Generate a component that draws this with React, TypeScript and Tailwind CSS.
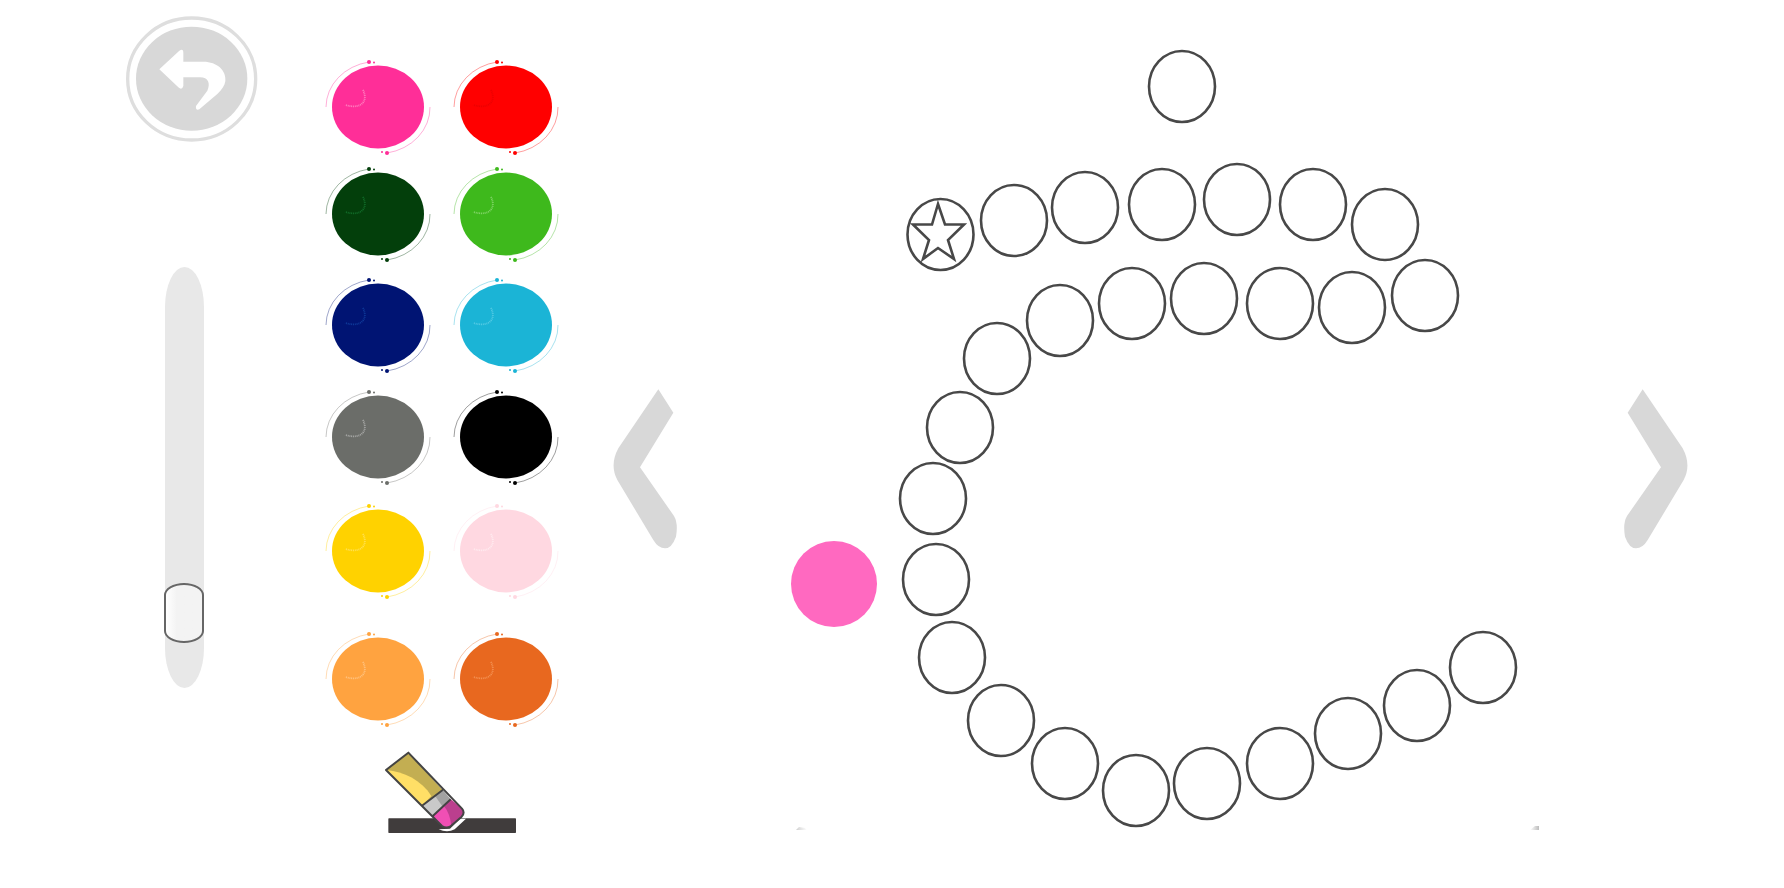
const swatches = [
  { left: '#ff2e98', right: '#ff0000', leftMark: '#ffd0e8', rightMark: '#d80000', gap: 'mt-[57px]' },
  { left: '#033f0b', right: '#3eb91c', leftMark: '#1f9a48', rightMark: '#c8f2b8', gap: 'mt-[7px]' },
  { left: '#001473', right: '#1bb4d6', leftMark: '#1c60c0', rightMark: '#8fe2f4', gap: 'mt-[11px]' },
  { left: '#6b6d69', right: '#000000', leftMark: '#e4e4e4', rightMark: '#000000', gap: 'mt-[12px]' },
  { left: '#ffd200', right: '#ffd8e1', leftMark: '#fff2a8', rightMark: '#ffffff', gap: 'mt-[14px]' },
  { left: '#ffa340', right: '#e8681f', leftMark: '#ffe4c0', rightMark: '#ffbc88', gap: 'mt-[28px]' },
]

// page coordinates of the dots
const dots = [
  [1182, 86], [1014, 220], [1085, 207], [1162, 204], [1237, 199], [1313, 204], [1385, 224],
  [1425, 295], [1352, 307], [1280, 303], [1204, 298], [1132, 303], [1060, 320], [997, 358],
  [960, 427], [933, 498], [936, 579], [952, 657], [1001, 720], [1065, 763], [1136, 790],
  [1207, 783], [1280, 763], [1348, 733], [1417, 705], [1483, 667],
]

function Swatch({ color, mark }: { color: string; mark: string }) {
  return (
    <svg width="128" height="100" viewBox="0 0 128 100">
      <path d="M12 50A52 46 0 0 1 55 5" fill="none" stroke={color} strokeWidth="0.7" opacity="0.55" />
      <circle cx="55" cy="5" r="2" fill={color} />
      <circle cx="60" cy="5.5" r="1" fill={color} />
      <path d="M116 50A52 46 0 0 1 73 96" fill="none" stroke={color} strokeWidth="0.7" opacity="0.55" />
      <circle cx="73" cy="96" r="2" fill={color} />
      <circle cx="68" cy="95" r="1" fill={color} />
      <ellipse cx="64" cy="50" rx="46" ry="41.5" fill={color} />
      <path
        d="M49 33C54 43 49 53 31 48"
        fill="none"
        stroke={mark}
        strokeWidth="1.8"
        strokeDasharray="1 0.8"
        opacity="0.5"
      />
    </svg>
  )
}

function Chevron({ flip }: { flip?: boolean }) {
  return (
    <svg width="100" height="180" viewBox="0 0 300 540" className={flip ? '-scale-x-100' : ''}>
      <path
        d="M175 28L220 98L120 262L222 408Q235 430 228 470Q215 505 195 505Q175 505 160 480L52 300Q28 255 55 205Z"
        fill="#d8d8d8"
      />
    </svg>
  )
}

export default function App() {
  return (
    <div className="flex h-[888px] w-[1784px] overflow-hidden bg-white">
      <div className="flex w-[314px] shrink-0 flex-col">
        <button className="ml-[100px] h-[160px] w-[200px]">
          <svg width="200" height="160" viewBox="0 0 600 480">
            <ellipse cx="275" cy="237" rx="192" ry="183" fill="none" stroke="#dedede" strokeWidth="10" />
            <ellipse cx="275" cy="236" rx="167" ry="156" fill="#d8d8d8" />
            <path
              d="M178 208L238 152Q250 144 250 158L250 185L310 185C352 185 380 212 376 244C374 258 366 268 352 282L298 328Q286 332 288 318L322 272C332 250 325 232 300 232L250 232L250 258Q246 272 235 262Z"
              fill="#ffffff"
            />
          </svg>
        </button>
        <div className="relative ml-[165px] mt-[107px] h-[421px] w-[39px] rounded-[50%/40px] bg-[#e8e8e8]">
          <div className="absolute -left-px top-[316px] h-[60px] w-[40px] rounded-[50%/12px] border-2 border-[#666666] bg-linear-to-r from-white to-[#f3f3f3] to-30%" />
        </div>
      </div>

      <div className="flex w-[286px] shrink-0 flex-col">
        <div className="flex flex-col">
          {swatches.map((row) => (
            <div key={row.left} className={`flex ${row.gap}`}>
              <Swatch color={row.left} mark={row.leftMark} />
              <Swatch color={row.right} mark={row.rightMark} />
            </div>
          ))}
        </div>
        <svg width="180" height="120" viewBox="0 0 540 360" className="ml-[46px] mt-px shrink-0">
          <rect x="85" y="265" width="383" height="44" rx="2" fill="#403c3c" />
          <path d="M236 298Q262 310 284 298L318 266L300 266L270 296Z" fill="#ffffff" />
          <path d="M145 68L78 120L185 228L248 180Z" fill="#c3ae52" />
          <path d="M80 120C130 125 185 150 214 198L185 228Z" fill="#ffdf66" />
          <path d="M185 228L248 180L272 208L216 260Z" fill="#c9c9c9" />
          <path d="M225 197L248 180L272 208L248 230Z" fill="#a2a2a2" />
          <path d="M216 260L272 208L306 236Q316 248 305 260L270 290Q258 296 246 288Z" fill="#f04fb4" />
          <path d="M252 228L272 208L306 236Q316 248 305 260L274 288Q270 250 252 228Z" fill="#bb3f8e" />
          <path
            d="M145 68L78 120L246 288Q258 296 270 290L305 260Q316 248 306 236ZM185 228L248 180M216 260L272 208"
            fill="none"
            stroke="#444444"
            strokeWidth="6"
            strokeLinejoin="round"
          />
        </svg>
      </div>

      <div className="flex w-[180px] shrink-0 pt-[380px]">
        <Chevron />
      </div>

      <div className="relative h-full w-[840px] shrink-0">
        <svg width="780" height="888" viewBox="780 0 780 888">
          <defs>
            <linearGradient id="fade-right" x1="0" x2="1" y1="0" y2="0">
              <stop offset="0" stopColor="#cfcfcf" />
              <stop offset="1" stopColor="#ffffff" />
            </linearGradient>
            <linearGradient id="fade-left" x1="0" x2="1" y1="0" y2="0">
              <stop offset="0" stopColor="#ffffff" />
              <stop offset="1" stopColor="#bdbdbd" />
            </linearGradient>
          </defs>
          <ellipse cx="834" cy="584" rx="43" ry="43" fill="#ff69c0" />
          {dots.map(([x, y]) => (
            <ellipse key={`${x}-${y}`} cx={x} cy={y + 0.5} rx="33" ry="35.5" fill="none" stroke="#484848" strokeWidth="2.6" />
          ))}
          <ellipse cx="940.5" cy="234.5" rx="33" ry="35.5" fill="none" stroke="#484848" strokeWidth="2.6" />
          <path
            d="M938 204L945 224.5L964 224.5L948 240L954 259L938 248L923 259L929 240L913 224.5L932 224.5Z"
            fill="none"
            stroke="#484848"
            strokeWidth="2.6"
          />
          <polygon points="796,830 799,827 805,828 807,830" fill="url(#fade-right)" />
          <polygon points="1530,830 1535,826 1539,826 1539,830" fill="url(#fade-left)" />
        </svg>
      </div>

      <div className="-ml-[19px] flex pt-[380px]">
        <Chevron flip />
      </div>
    </div>
  )
}
